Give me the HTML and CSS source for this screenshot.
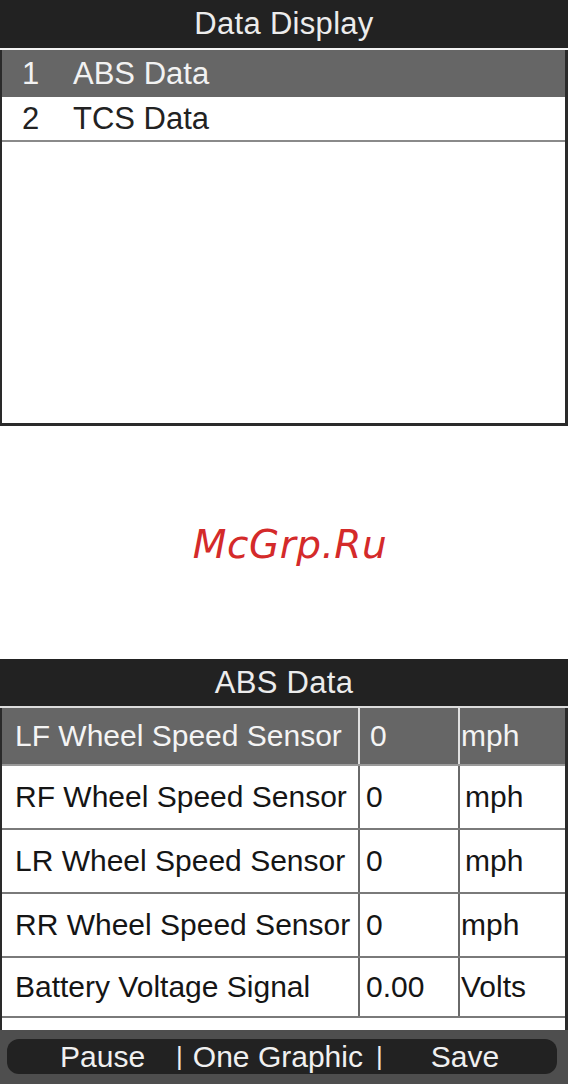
FILE: index.html
```html
<!DOCTYPE html>
<html>
<head>
<meta charset="utf-8">
<link rel="stylesheet" href="styles.css">
</head>
<body>
<div class="screen top">
  <div class="title">Data Display</div>
  <div class="menu">
    <div class="item sel"><span class="num">1</span><span class="lbl">ABS Data</span></div>
    <div class="item"><span class="num">2</span><span class="lbl">TCS Data</span></div>
  </div>
  <div class="empty"></div>
</div>
<div class="mark">McGrp.Ru</div>
<div class="screen bottom">
  <div class="title t2">ABS Data</div>
  <div class="table">
    <div class="row sel first"><div class="c1">LF Wheel Speed Sensor</div><div class="c2">0</div><div class="c3">mph</div></div>
    <div class="row"><div class="c1">RF Wheel Speed Sensor</div><div class="c2">0</div><div class="c3 ind">mph</div></div>
    <div class="row"><div class="c1">LR Wheel Speed Sensor</div><div class="c2">0</div><div class="c3 ind">mph</div></div>
    <div class="row"><div class="c1">RR Wheel Speed Sensor</div><div class="c2">0</div><div class="c3">mph</div></div>
    <div class="row last"><div class="c1">Battery Voltage Signal</div><div class="c2">0.00</div><div class="c3">Volts</div></div>
  </div>
  <div class="spacer"></div>
  <div class="footer">
    <div class="pill">
      <span class="b b1">Pause</span>
      <span class="sep s1">|</span>
      <span class="b b2">One Graphic</span>
      <span class="sep s2">|</span>
      <span class="b b3">Save</span>
    </div>
  </div>
</div>
</body>
</html>
```
FILE: styles.css
```css
html, body {
  margin: 0;
  padding: 0;
  background: #ffffff;
}
body {
  width: 568px;
  height: 1084px;
  overflow: hidden;
  font-family: "Liberation Sans", Arial, sans-serif;
  display: flex;
  flex-direction: column;
}
.screen {
  box-sizing: border-box;
  width: 568px;
  border-left: 2px solid #2a2a2a;
  border-right: 3px solid #2a2a2a;
  display: flex;
  flex-direction: column;
  flex-shrink: 0;
}
.top {
  height: 426px;
  border-bottom: 3px solid #2a2a2a;
}
.title {
  height: 48px;
  flex-shrink: 0;
  background: #222222;
  color: #ececec;
  font-size: 31px;
  letter-spacing: 0.3px;
  display: flex;
  align-items: center;
  justify-content: center;
  margin: 0 -3px 0 -2px;
  border-bottom: 2px solid #f4f4f4;
}
.menu {
  display: flex;
  flex-direction: column;
}
.item {
  height: 42px;
  display: flex;
  align-items: center;
  color: #222;
  font-size: 31px;
  border-top: 1px solid #ffffff;
}
.item.sel {
  height: 47px;
  background: #666666;
  color: #f2f2f2;
  border-top: 0;
}
.item + .item {
  border-bottom: 2px solid #8a8a8a;
}
.num {
  width: 71px;
  padding-left: 20px;
  box-sizing: border-box;
}
.empty {
  flex: 1;
  background: #fff;
}
.mark {
  height: 233px;
  flex-shrink: 0;
  display: flex;
  align-items: center;
  justify-content: center;
  font-family: "DejaVu Sans", sans-serif;
  font-style: italic;
  font-size: 39px;
  color: #d42a2a;
  letter-spacing: 0.5px;
  padding-left: 12px;
  padding-top: 4px;
  box-sizing: border-box;
}
.bottom {
  flex: 1 0 auto;
  height: 425px;
}
.t2 {
  height: 47px;
  border-bottom: 2px solid #dcdcdc;
}
.table {
  display: flex;
  flex-direction: column;
  flex-shrink: 0;
}
.row {
  height: 64px;
  display: grid;
  grid-template-columns: 358px 100px 1fr;
  border-bottom: 2px solid #7a7a7a;
  color: #151515;
  font-size: 30px;
  box-sizing: border-box;
}
.row.first {
  height: 58px;
}
.row.last {
  height: 60px;
}
.row.sel {
  background: #666666;
  color: #f4f4f4;
  border-bottom-color: #999;
}
.row > div {
  display: flex;
  align-items: center;
  white-space: nowrap;
}
.c1 {
  padding-left: 13px;
  border-right: 2px solid #6a6a6a;
}
.row.sel .c1, .row.sel .c2 {
  border-right-color: #e0e0e0;
}
.c2 {
  padding-left: 6px;
  border-right: 2px solid #6a6a6a;
}
.row.sel .c2 {
  padding-left: 10px;
}
.c3 {
  padding-left: 1px;
}
.c3.ind {
  padding-left: 5px;
}
.spacer {
  height: 12px;
  flex-shrink: 0;
  background: #fff;
}
.footer {
  flex: 1;
  background: #4e4e4e;
  margin: 0 -3px 0 -2px;
  padding: 9px 11px 10px 7px;
  display: flex;
}
.pill {
  flex: 1;
  background: #222222;
  border-radius: 12px;
  display: flex;
  align-items: center;
  color: #f0f0f0;
  font-size: 30px;
}
.b1 { margin-left: 53px; }
.s1 { margin-left: 31px; font-size: 26px; }
.b2 { margin-left: 10px; }
.s2 { margin-left: 13px; font-size: 26px; }
.b3 { margin-left: 48px; }
```
